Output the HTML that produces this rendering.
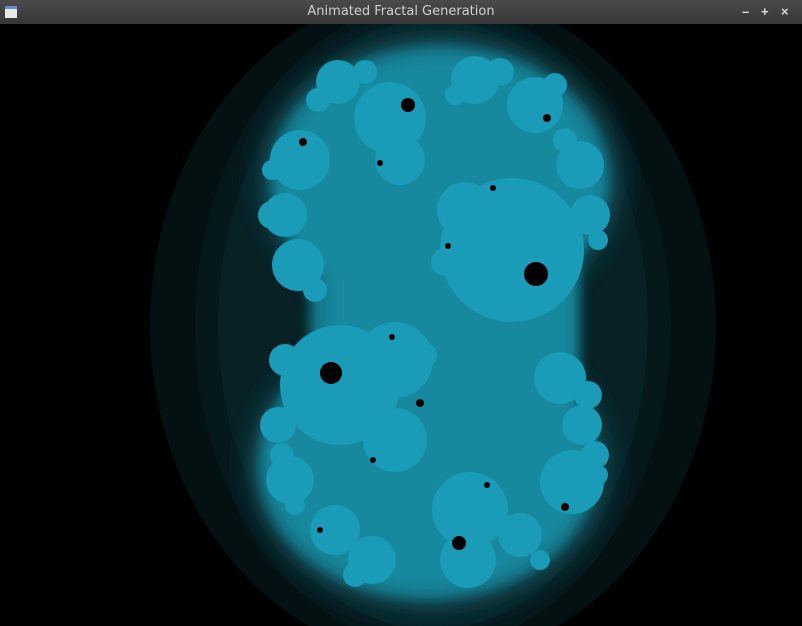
<!DOCTYPE html>
<html><head><style>
html,body{margin:0;padding:0;background:#000;width:802px;height:626px;overflow:hidden}
.bar{position:absolute;left:0;top:0;width:802px;height:24px;background:linear-gradient(#4a4a4a,#363636);color:#cfcfcf;font:13px "DejaVu Sans","Liberation Sans",sans-serif;}
.t{position:absolute;left:0;right:0;top:4px;text-align:center}
.ic{position:absolute;left:5px;top:6px;width:12px;height:12px;background:#e8e8e8;border-top:3px solid #6a8ac8;box-sizing:border-box}
.b{position:absolute;top:4px;font:bold 13px "Liberation Sans",sans-serif;color:#ddd}
</style></head><body>
<svg width="802" height="626" style="position:absolute;left:0;top:0;overflow:hidden">
<defs>
<filter id="bl" x="-30%" y="-30%" width="160%" height="160%"><feGaussianBlur stdDeviation="10"/></filter>
<filter id="bl2" x="-20%" y="-20%" width="140%" height="140%"><feGaussianBlur stdDeviation="6"/></filter>
</defs>
<rect width="802" height="626" fill="#000"/>
<ellipse cx="433" cy="325" rx="283" ry="335" fill="#031113"/>
<ellipse cx="433" cy="325" rx="238" ry="322" fill="#05181c"/>
<ellipse cx="433" cy="325" rx="215" ry="305" fill="#072125"/>
<g fill="#0c3a43" filter="url(#bl)">
<ellipse cx="440" cy="180" rx="185" ry="150"/>
<ellipse cx="430" cy="465" rx="185" ry="150"/>
</g>
<g fill="#137a8e" filter="url(#bl2)">
<ellipse cx="440" cy="180" rx="170" ry="135"/>
<ellipse cx="428" cy="465" rx="170" ry="135"/>
<rect x="310" y="200" width="270" height="240"/>
</g>
<g fill="#17899f" filter="url(#bl2)">
<ellipse cx="440" cy="185" rx="158" ry="125"/>
<ellipse cx="428" cy="460" rx="158" ry="125"/>
<rect x="330" y="220" width="240" height="210"/>
</g>
<g fill="#1a9bb7">
<circle cx="338" cy="82" r="22"/><circle cx="318" cy="100" r="12"/><circle cx="365" cy="72" r="12"/>
<circle cx="390" cy="118" r="36"/><circle cx="400" cy="160" r="25"/>
<circle cx="300" cy="160" r="30"/><circle cx="272" cy="170" r="10"/><circle cx="272" cy="215" r="14"/><circle cx="285" cy="215" r="22"/>
<circle cx="298" cy="265" r="26"/><circle cx="315" cy="290" r="12"/>
<circle cx="475" cy="80" r="24"/><circle cx="455" cy="95" r="10"/><circle cx="500" cy="72" r="14"/>
<circle cx="535" cy="105" r="28"/><circle cx="555" cy="85" r="12"/><circle cx="580" cy="165" r="24"/><circle cx="565" cy="140" r="12"/>
<circle cx="590" cy="215" r="20"/><circle cx="598" cy="240" r="10"/><circle cx="512" cy="250" r="72"/><circle cx="465" cy="210" r="28"/><circle cx="445" cy="262" r="14"/>
<circle cx="340" cy="385" r="60"/><circle cx="395" cy="360" r="38"/><circle cx="425" cy="355" r="12"/><circle cx="285" cy="360" r="16"/>
<circle cx="278" cy="425" r="18"/><circle cx="290" cy="480" r="24"/><circle cx="282" cy="455" r="12"/><circle cx="295" cy="505" r="10"/>
<circle cx="335" cy="530" r="25"/><circle cx="372" cy="560" r="24"/><circle cx="355" cy="575" r="12"/>
<circle cx="395" cy="440" r="32"/><circle cx="470" cy="510" r="38"/><circle cx="468" cy="560" r="28"/>
<circle cx="520" cy="535" r="22"/><circle cx="540" cy="560" r="10"/>
<circle cx="560" cy="378" r="26"/><circle cx="588" cy="395" r="14"/><circle cx="582" cy="425" r="20"/>
<circle cx="572" cy="482" r="32"/><circle cx="595" cy="455" r="14"/><circle cx="598" cy="475" r="10"/>
</g>
<g fill="#000">
<circle cx="408" cy="105" r="7"/><circle cx="536" cy="274" r="12"/><circle cx="331" cy="373" r="11"/>
<circle cx="459" cy="543" r="7"/><circle cx="303" cy="142" r="4"/><circle cx="547" cy="118" r="4"/>
<circle cx="448" cy="246" r="3"/><circle cx="420" cy="403" r="4"/><circle cx="373" cy="460" r="3"/>
<circle cx="565" cy="507" r="4"/><circle cx="320" cy="530" r="3"/><circle cx="380" cy="163" r="3"/>
<circle cx="493" cy="188" r="3"/><circle cx="392" cy="337" r="3"/><circle cx="487" cy="485" r="3"/>
</g>
</svg>
<div class="bar"><div class="ic"></div><div class="t">Animated Fractal Generation</div>
<span class="b" style="left:742px">–</span><span class="b" style="left:761px">+</span><span class="b" style="left:781px">×</span></div>
</body></html>
